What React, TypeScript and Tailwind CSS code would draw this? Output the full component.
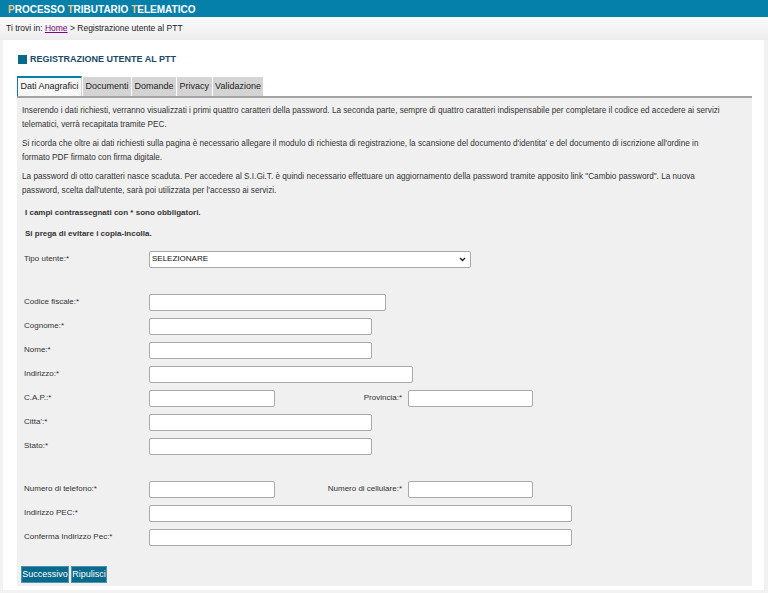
import React from 'react';

const font = { fontFamily: '"Liberation Sans", Arial, sans-serif' };

const tabs = ['Dati Anagrafici', 'Documenti', 'Domande', 'Privacy', 'Validazione'];

const Field = ({ w }: { w: string }) => (
    <input type="text" className={`h-[17px] ${w} bg-white border border-[#a9a9a9] rounded-[2px] outline-none px-1 text-[8px]`} />
);

const Row = ({ label, children }: { label: string; children: React.ReactNode }) => (
    <div className="flex items-center h-[24px] pl-[2px]">
        <div className="w-[125px] shrink-0 text-[8px] text-[#333]">{label}</div>
        {children}
    </div>
);

const SideLabel = ({ text }: { text: string }) => (
    <div className="w-[133px] shrink-0 text-right pr-[6px] text-[8px] text-[#333]">{text}</div>
);

export default function App() {
    return (
        <div style={font} className="min-h-[593px] bg-[#f2f2f2] text-[#222]">
            {/* top bar */}
            <div className="h-[17px] bg-[#0580ab] border-t-2 border-[#0580ab] flex flex-col">
                <div className="h-px bg-[#8cc7dc]" />
                <div className="flex-1 flex items-center pl-[8px] text-[10px] font-bold text-white">
                    <span><span className="text-[#f2c686]">P</span>ROCESSO <span className="text-[#f2c686]">T</span>RIBUTARIO <span className="text-[#f2c686]">T</span>ELEMATICO</span>
                </div>
            </div>

            {/* breadcrumb */}
            <div className="h-[23px] bg-gradient-to-b from-[#fbfbfb] to-[#ececec] flex items-center pl-[6px] text-[8.5px] text-[#222]">
                Ti trovi in:&nbsp;<a className="text-[#800080] underline">Home</a>&nbsp;&gt; Registrazione utente al PTT
            </div>

            {/* main panel */}
            <div className="mx-[3px] w-[761px] bg-white pt-[15px] pb-[4px] pl-[14px]">
                <div className="flex items-center gap-[3px] pl-[1px] h-[9px]">
                    <div className="w-[9px] h-[9px] bg-[#0a6a8c]" />
                    <span className="text-[9px] font-bold text-[#174a66]">REGISTRAZIONE UTENTE AL PTT</span>
                </div>

                <div className="mt-[12px] w-[735px]">
                    <div className="flex items-end h-[20px]">
                        {tabs.map((t, i) => (
                            <div
                                key={t}
                                className={
                                    i === 0
                                        ? 'h-[20px] px-[2.5px] flex items-center text-[9px] text-[#222] bg-[#f7f7f7] border-t-2 border-l border-[#0580ab] border-r border-r-[#cfcfcf]'
                                        : 'h-[19px] px-[2.5px] flex items-center text-[9px] text-[#222] bg-[#d4d4d4] border-l border-white'
                                }
                            >
                                {t}
                            </div>
                        ))}
                    </div>
                    <div className="h-[2px] bg-[#a3a3a3]" />

                    <div className="bg-[#f0f0f0] h-[488px] pt-[6px] pl-[5px] text-[#333]">
                        <div className="pr-[32px] text-[8.2px]">
                            <p className="leading-[14px] mb-[5px]">
                                Inserendo i dati richiesti, verranno visualizzati i primi quattro caratteri della password. La seconda parte, sempre di quattro caratteri indispensabile per completare il codice ed accedere ai servizi telematici, verrà recapitata tramite PEC.
                            </p>
                            <p className="leading-[14px] mb-[5px]">
                                Si ricorda che oltre ai dati richiesti sulla pagina è necessario allegare il modulo di richiesta di registrazione, la scansione del documento d'identita' e del documento di iscrizione all'ordine in formato PDF firmato con firma digitale.
                            </p>
                            <p className="leading-[14px]">
                                La password di otto caratteri nasce scaduta. Per accedere al S.I.Gi.T. è quindi necessario effettuare un aggiornamento della password tramite apposito link "Cambio password". La nuova password, scelta dall'utente, sarà poi utilizzata per l'accesso ai servizi.
                            </p>
                        </div>
                        <p className="leading-[14px] mt-[8px] pl-[3px] text-[8px] font-bold">I campi contrassegnati con * sono obbligatori.</p>
                        <p className="leading-[14px] mt-[7px] pl-[3px] text-[8px] font-bold">Si prega di evitare i copia-incolla.</p>

                        <div className="mt-[6px]">
                            <Row label="Tipo utente:*">
                                <div className="relative w-[322px] h-[17px] bg-white border border-[#a9a9a9] rounded-[2px] flex items-center pl-[2px] text-[8px] text-[#111]">
                                    SELEZIONARE
                                    <svg className="absolute right-[4px] top-[5px]" width="7" height="5" viewBox="0 0 7 5">
                                        <path d="M1 1 L3.5 3.5 L6 1" stroke="#222" strokeWidth="1.4" fill="none" />
                                    </svg>
                                </div>
                            </Row>
                            <div className="h-[19px]" />
                            <Row label="Codice fiscale:*"><Field w="w-[237px]" /></Row>
                            <Row label="Cognome:*"><Field w="w-[223px]" /></Row>
                            <Row label="Nome:*"><Field w="w-[223px]" /></Row>
                            <Row label="Indirizzo:*"><Field w="w-[264px]" /></Row>
                            <Row label="C.A.P.:*">
                                <Field w="w-[126px]" />
                                <SideLabel text="Provincia:*" />
                                <Field w="w-[125px]" />
                            </Row>
                            <Row label="Citta':*"><Field w="w-[223px]" /></Row>
                            <Row label="Stato:*"><Field w="w-[223px]" /></Row>
                            <div className="h-[19px]" />
                            <Row label="Numero di telefono:*">
                                <Field w="w-[126px]" />
                                <SideLabel text="Numero di cellulare:*" />
                                <Field w="w-[125px]" />
                            </Row>
                            <Row label="Indirizzo PEC:*"><Field w="w-[423px]" /></Row>
                            <Row label="Conferma Indirizzo Pec:*"><Field w="w-[423px]" /></Row>
                        </div>

                        <div className="flex gap-[2px] mt-[17px] -ml-[1px]">
                            <button className="h-[17px] w-[48px] bg-[#0a6a8c] text-white text-[9px] border border-[#4d93ad]">Successivo</button>
                            <button className="h-[17px] w-[36px] bg-[#0a6a8c] text-white text-[9px] border border-[#4d93ad]">Ripulisci</button>
                        </div>
                    </div>
                </div>
            </div>
        </div>
    );
}
